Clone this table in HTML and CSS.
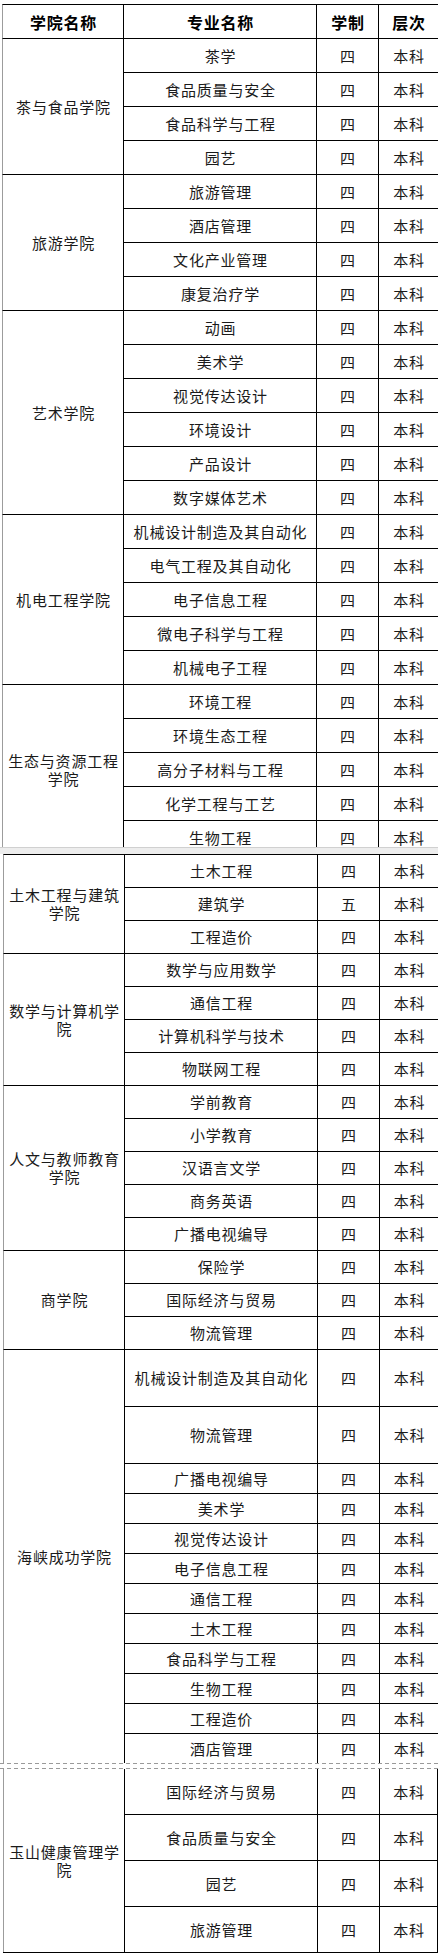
FILE: index.html
```html
<!DOCTYPE html>
<html lang="zh-CN">
<head>
<meta charset="utf-8">
<title>学院专业设置</title>
<link rel="stylesheet" href="styles.css">
</head>
<body>
<div class="sheet">
  <div class="piece p1">
    <div class="c school h">学院名称</div>
    <div class="c maj h">专业名称</div>
    <div class="c yr h">学制</div>
    <div class="c lv h">层次</div>

    <div class="c school span4">茶与食品学院</div>
    <div class="c maj">茶学</div><div class="c yr">四</div><div class="c lv">本科</div>
    <div class="c maj">食品质量与安全</div><div class="c yr">四</div><div class="c lv">本科</div>
    <div class="c maj">食品科学与工程</div><div class="c yr">四</div><div class="c lv">本科</div>
    <div class="c maj">园艺</div><div class="c yr">四</div><div class="c lv">本科</div>

    <div class="c school span4">旅游学院</div>
    <div class="c maj">旅游管理</div><div class="c yr">四</div><div class="c lv">本科</div>
    <div class="c maj">酒店管理</div><div class="c yr">四</div><div class="c lv">本科</div>
    <div class="c maj">文化产业管理</div><div class="c yr">四</div><div class="c lv">本科</div>
    <div class="c maj">康复治疗学</div><div class="c yr">四</div><div class="c lv">本科</div>

    <div class="c school span6">艺术学院</div>
    <div class="c maj">动画</div><div class="c yr">四</div><div class="c lv">本科</div>
    <div class="c maj">美术学</div><div class="c yr">四</div><div class="c lv">本科</div>
    <div class="c maj">视觉传达设计</div><div class="c yr">四</div><div class="c lv">本科</div>
    <div class="c maj">环境设计</div><div class="c yr">四</div><div class="c lv">本科</div>
    <div class="c maj">产品设计</div><div class="c yr">四</div><div class="c lv">本科</div>
    <div class="c maj">数字媒体艺术</div><div class="c yr">四</div><div class="c lv">本科</div>

    <div class="c school span5">机电工程学院</div>
    <div class="c maj">机械设计制造及其自动化</div><div class="c yr">四</div><div class="c lv">本科</div>
    <div class="c maj">电气工程及其自动化</div><div class="c yr">四</div><div class="c lv">本科</div>
    <div class="c maj">电子信息工程</div><div class="c yr">四</div><div class="c lv">本科</div>
    <div class="c maj">微电子科学与工程</div><div class="c yr">四</div><div class="c lv">本科</div>
    <div class="c maj">机械电子工程</div><div class="c yr">四</div><div class="c lv">本科</div>

    <div class="c school span5">生态与资源工程学院</div>
    <div class="c maj">环境工程</div><div class="c yr">四</div><div class="c lv">本科</div>
    <div class="c maj">环境生态工程</div><div class="c yr">四</div><div class="c lv">本科</div>
    <div class="c maj">高分子材料与工程</div><div class="c yr">四</div><div class="c lv">本科</div>
    <div class="c maj">化学工程与工艺</div><div class="c yr">四</div><div class="c lv">本科</div>
    <div class="c maj">生物工程</div><div class="c yr">四</div><div class="c lv">本科</div>
  </div>

  <div class="band"></div>

  <div class="piece p2">
    <div class="c school span3">土木工程与建筑学院</div>
    <div class="c maj">土木工程</div><div class="c yr">四</div><div class="c lv">本科</div>
    <div class="c maj">建筑学</div><div class="c yr">五</div><div class="c lv">本科</div>
    <div class="c maj">工程造价</div><div class="c yr">四</div><div class="c lv">本科</div>

    <div class="c school span4">数学与计算机学院</div>
    <div class="c maj">数学与应用数学</div><div class="c yr">四</div><div class="c lv">本科</div>
    <div class="c maj">通信工程</div><div class="c yr">四</div><div class="c lv">本科</div>
    <div class="c maj">计算机科学与技术</div><div class="c yr">四</div><div class="c lv">本科</div>
    <div class="c maj">物联网工程</div><div class="c yr">四</div><div class="c lv">本科</div>

    <div class="c school span5">人文与教师教育学院</div>
    <div class="c maj">学前教育</div><div class="c yr">四</div><div class="c lv">本科</div>
    <div class="c maj">小学教育</div><div class="c yr">四</div><div class="c lv">本科</div>
    <div class="c maj">汉语言文学</div><div class="c yr">四</div><div class="c lv">本科</div>
    <div class="c maj">商务英语</div><div class="c yr">四</div><div class="c lv">本科</div>
    <div class="c maj">广播电视编导</div><div class="c yr">四</div><div class="c lv">本科</div>

    <div class="c school span3">商学院</div>
    <div class="c maj">保险学</div><div class="c yr">四</div><div class="c lv">本科</div>
    <div class="c maj">国际经济与贸易</div><div class="c yr">四</div><div class="c lv">本科</div>
    <div class="c maj">物流管理</div><div class="c yr">四</div><div class="c lv">本科</div>

    <div class="c school span12">海峡成功学院</div>
    <div class="c maj">机械设计制造及其自动化</div><div class="c yr">四</div><div class="c lv">本科</div>
    <div class="c maj">物流管理</div><div class="c yr">四</div><div class="c lv">本科</div>
    <div class="c maj">广播电视编导</div><div class="c yr">四</div><div class="c lv">本科</div>
    <div class="c maj">美术学</div><div class="c yr">四</div><div class="c lv">本科</div>
    <div class="c maj">视觉传达设计</div><div class="c yr">四</div><div class="c lv">本科</div>
    <div class="c maj">电子信息工程</div><div class="c yr">四</div><div class="c lv">本科</div>
    <div class="c maj">通信工程</div><div class="c yr">四</div><div class="c lv">本科</div>
    <div class="c maj">土木工程</div><div class="c yr">四</div><div class="c lv">本科</div>
    <div class="c maj">食品科学与工程</div><div class="c yr">四</div><div class="c lv">本科</div>
    <div class="c maj">生物工程</div><div class="c yr">四</div><div class="c lv">本科</div>
    <div class="c maj">工程造价</div><div class="c yr">四</div><div class="c lv">本科</div>
    <div class="c maj">酒店管理</div><div class="c yr">四</div><div class="c lv">本科</div>
  </div>

  <div class="cut"></div>

  <div class="piece p3">
    <div class="c school span4 first">玉山健康管理学院</div>
    <div class="c maj first">国际经济与贸易</div><div class="c yr first">四</div><div class="c lv first">本科</div>
    <div class="c maj">食品质量与安全</div><div class="c yr">四</div><div class="c lv">本科</div>
    <div class="c maj">园艺</div><div class="c yr">四</div><div class="c lv">本科</div>
    <div class="c maj">旅游管理</div><div class="c yr">四</div><div class="c lv">本科</div>
  </div>
</div>
</body>
</html>
```

FILE: styles.css
```css
html, body {
  margin: 0;
  padding: 0;
  background: #ffffff;
}

body {
  font-family: "Noto Sans CJK SC", "Noto Sans", sans-serif;
  color: #1a1a1a;
}

.sheet {
  width: 438px;
}

.piece {
  display: grid;
}

.p1 {
  margin: 4px 0 0 2px;
  grid-template-columns: 121px 193px 62px 60px;
  grid-auto-rows: 34px;
  height: 843px;
  overflow: hidden;
}

.band {
  height: 7px;
  box-sizing: border-box;
  background: #ededed;
  border-top: 1px solid #d0d0d0;
}

.p2 {
  margin-left: 3px;
  grid-template-columns: 121px 193px 62px 59px;
  grid-template-rows: repeat(15, 33px) repeat(2, 57px) repeat(10, 30px);
}

.cut {
  height: 6px;
  background:
    repeating-linear-gradient(90deg, #9a9a9a 0 4px, transparent 4px 7px) top left / 100% 1px no-repeat,
    repeating-linear-gradient(90deg, #9a9a9a 0 4px, transparent 4px 7px) bottom left / 100% 1px no-repeat;
}

.p3 {
  margin-left: 3px;
  width: 435px;
  grid-template-columns: 121px 193px 62px 59px;
  grid-template-rows: 45px repeat(3, 46px);
  border-bottom: 1px solid #000;
}

.c {
  box-sizing: border-box;
  border-top: 1px solid #000;
  border-left: 1px solid #000;
  display: flex;
  align-items: center;
  justify-content: center;
  text-align: center;
  font-size: 15px;
  line-height: 18px;
  letter-spacing: 0.8px;
  padding: 0 1px 0 2px;
  overflow: hidden;
}

.c.first {
  border-top: none;
}

.school {
  grid-column: 1;
  border-left-color: #9c9c9c;
}

.maj { grid-column: 2; }
.yr  { grid-column: 3; }
.lv  { grid-column: 4; }

.p3 .lv {
  border-right: 1px solid #000;
}

.span3  { grid-row: span 3; }
.span4  { grid-row: span 4; }
.span5  { grid-row: span 5; }
.span6  { grid-row: span 6; }
.span12 { grid-row: span 12; }

.h {
  font-weight: bold;
  font-size: 16px;
  letter-spacing: 0.8px;
  color: #000;
}
```
